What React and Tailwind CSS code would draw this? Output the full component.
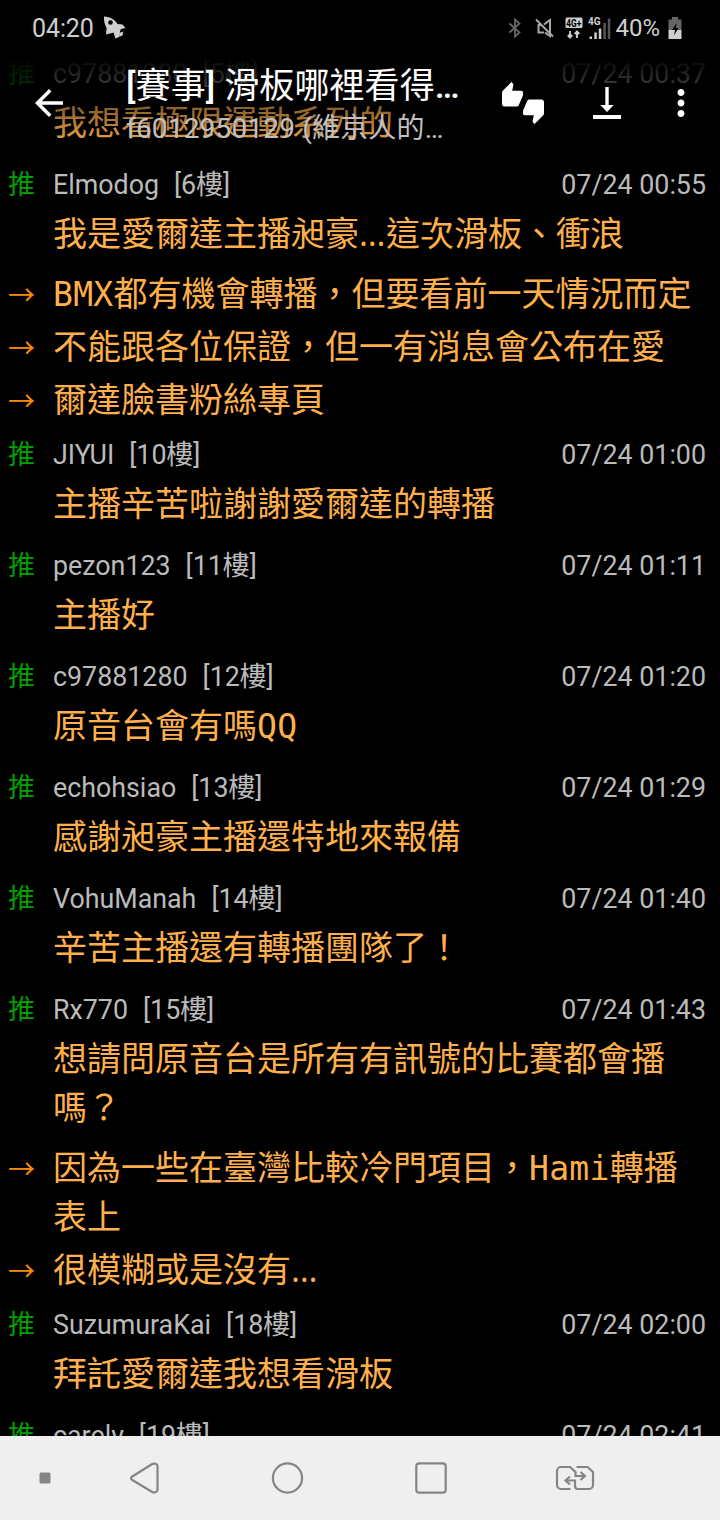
import { MdArrowBack, MdMoreVert, MdThumbsUpDown } from "react-icons/md";

const comments = [
  { user: "c97881280", floor: 5, time: "07/24 00:37", lines: ["我想看極限運動系列的"] },
  { user: "Elmodog", floor: 6, time: "07/24 00:55", lines: ["我是愛爾達主播昶豪…這次滑板、衝浪"] },
  { lines: ["BMX都有機會轉播，但要看前一天情況而定"] },
  { lines: ["不能跟各位保證，但一有消息會公布在愛"] },
  { lines: ["爾達臉書粉絲專頁"] },
  { user: "JIYUI", floor: 10, time: "07/24 01:00", lines: ["主播辛苦啦謝謝愛爾達的轉播"] },
  { user: "pezon123", floor: 11, time: "07/24 01:11", lines: ["主播好"] },
  { user: "c97881280", floor: 12, time: "07/24 01:20", lines: ["原音台會有嗎QQ"] },
  { user: "echohsiao", floor: 13, time: "07/24 01:29", lines: ["感謝昶豪主播還特地來報備"] },
  { user: "VohuManah", floor: 14, time: "07/24 01:40", lines: ["辛苦主播還有轉播團隊了！"] },
  { user: "Rx770", floor: 15, time: "07/24 01:43", lines: ["想請問原音台是所有有訊號的比賽都會播", "嗎？"] },
  { lines: ["因為一些在臺灣比較冷門項目，Hami轉播", "表上"] },
  { lines: ["很模糊或是沒有…"] },
  { user: "SuzumuraKai", floor: 18, time: "07/24 02:00", lines: ["拜託愛爾達我想看滑板"] },
  { user: "carely", floor: 19, time: "07/24 02:41", lines: [""] },
];

// latin runs and the ellipsis use their own face, the rest stays in the CJK one
const Line = ({ text }) => (
  <p className="h-[49px] leading-[49px] whitespace-nowrap">
    {text.split(/(…|[A-Za-z]+)/).map((part, i) => {
      if (part === "…") {
        return <span key={i} className="inline-block w-[27px] leading-none font-['Open_Sans',sans-serif]">…</span>;
      }
      if (/^[A-Za-z]+$/.test(part)) {
        return <span key={i} className="text-[33px] leading-none tracking-[0.3px] font-['DejaVu_Sans_Mono',monospace]">{part}</span>;
      }
      return part;
    })}
  </p>
);

const Body = ({ lines }) => (
  <div className="pl-[53px] text-[34px] text-[#ffb04c] font-['Liberation_Mono','Noto_Sans_CJK_TC',monospace]">
    {lines.map((line, i) => (
      <Line key={i} text={line} />
    ))}
  </div>
);

const Comment = ({ item }) => {
  if (!item.user) {
    return (
      <li className="flex pt-[3px] pb-px">
        <span className="-mr-[35px] w-[35px] pl-2 text-[27px] leading-[41px] text-[#ff8c00] font-['Noto_Sans_CJK_TC',sans-serif]">→</span>
        <Body lines={item.lines} />
      </li>
    );
  }
  return (
    <li className="pb-2">
      <div className="flex h-[54px] items-center pr-3.5 pb-px pl-2 text-[26.8px] text-[#bbbbbb]">
        <span className="w-[45px] text-[27px] text-[#00a000]">推</span>
        <span className="flex-1">
          {item.user}
          <span className="ml-[15px]">[{item.floor}樓]</span>
        </span>
        <span>{item.time}</span>
      </div>
      <Body lines={item.lines} />
    </li>
  );
};

const RocketIcon = () => (
  <svg width="24" height="24" viewBox="0 0 24 24" fill="#cfcfcf">
    <path d="M1 .5C7 .8 12 3.500 14.500 8l5 .6 3 3.400-4.500 1-.8 1.800-1.200 6.200-3.500 1.500-2-6-1.500.6L3 18.500l.6-6.500C1.500 8.500.8 4.500 1 .5z" />
    <circle cx="7.500" cy="6.500" r="2.300" fill="#000" />
    <path d="M16 17l4.500-1.500-1 2.500 1 .5-4 2.500z" />
  </svg>
);

const StatusBar = () => (
  <div className="flex h-14 items-center pr-[38px] pl-8 text-[25px] text-[#cfcfcf]">
    <span className="pt-px tracking-[-0.1px]">04:20</span>
    <span className="ml-[9px]"><RocketIcon /></span>
    <div className="ml-auto flex items-center">
      <svg width="14" height="20" viewBox="0 0 14 20" fill="none" stroke="#666" strokeWidth="1.800">
        <path d="M1.500 5.500l10 9L7 18.500v-17l4.500 4-10 9" />
      </svg>
      <svg className="ml-[13px]" width="19" height="20" viewBox="0 0 19 20" fill="none" stroke="#a8a8a8" strokeWidth="2">
        <path d="M9 14.500H3.500V7H6M9 6.500l6-4.500v16l-5-3.500M1 1.500l17 17" />
      </svg>
      <svg className="ml-[11px]" width="18" height="22" viewBox="0 0 18 22">
        <rect x="0.500" y="0.500" width="17" height="10.500" rx="1.500" fill="#cfcfcf" />
        <text x="8.800" y="9.500" fontSize="10" fontWeight="700" textAnchor="middle" textLength="15" lengthAdjust="spacingAndGlyphs" fill="#000">4G+</text>
        <path d="M5 14v6M2.800 18L5 20.500 7.200 18M12 21v-6M9.800 17L12 14.500l2.200 2.500" fill="none" stroke="#cfcfcf" strokeWidth="1.900" />
      </svg>
      <svg className="ml-[5px]" width="23" height="22" viewBox="0 0 23 22" fill="#cfcfcf">
        <text x="0" y="7.500" fontSize="10" fontWeight="700">4G</text>
        <path d="M1.500 19.500H4V22H1.500zM6.300 15.500h2.500V22H6.300zM10.800 11.500h2.500V22h-2.500z" />
        <path d="M15.300 6h2.500v16h-2.500zM19.800 1.500h2.500V22h-2.500z" fill="#555" />
      </svg>
      <span className="ml-1 text-[24px]">40%</span>
      <svg className="ml-2" width="14" height="22" viewBox="0 0 14 22">
        <path d="M4 0h6v2.500h3.500V13H.5V2.500H4z" fill="#666" />
        <path d="M.5 13h13v9H.5z" fill="#cfcfcf" />
        <path d="M8.500 6L4 13h3l-1 5.500L10.500 11H8z" fill="#000" />
      </svg>
    </div>
  </div>
);

const AppBar = () => (
  <div className="flex h-[94px] items-center text-white">
    <MdArrowBack size={42} className="ml-7 shrink-0" />
    <div className="ml-14 w-[340px] pt-[9px] whitespace-nowrap">
      <h1 className="h-[42px] text-[35px] leading-[42px] tracking-[0.1px]">
        <span className="font-medium">[</span>賽事<span className="font-medium">]</span> 滑板哪裡看得<span className="font-medium">…</span>
      </h1>
      <p className="h-[42px] text-[28px] leading-[42px] tracking-[0.18px] text-[#c0c0c0]">f6012950129 (維京人的…</p>
    </div>
    <MdThumbsUpDown size={42} className="ml-9 shrink-0" />
    <svg className="ml-[42px] shrink-0" width="42" height="42" viewBox="0 0 42 42" fill="#fff">
      <path d="M19.300 5h3.400v18h5L21 30l-6.700-7h5zM7 33h28v4H7z" />
    </svg>
    <MdMoreVert size={42} className="ml-8 shrink-0" />
  </div>
);

const NavBar = () => (
  <nav className="absolute inset-x-0 bottom-0 h-[84px] bg-[#efefef]">
    <svg width="720" height="84" viewBox="0 0 720 84" fill="none" stroke="#858585" strokeWidth="2.200">
      <rect x="39.500" y="36.500" width="11" height="11" rx="1.500" fill="#858585" stroke="none" />
      <path d="M132.300 40.500l19.500-12.200c2.500-1.500 5.700-.6 5.700 2v23.400c0 2.600-3.300 3.500-5.700 2l-19.500-11.700c-1.700-1-1.700-2.500 0-3.500z" />
      <circle cx="287.500" cy="42" r="14.600" />
      <rect x="416.300" y="27.300" width="29.400" height="29.400" rx="3" />
      <path d="M570.500 53H561a4 4 0 0 1-4-4V35a4 4 0 0 1 4-4h9l5.500 5v4h9M580.500 36l4.500 4-4.500 4M576.500 31h11l5.500 5v13a4 4 0 0 1-4 4h-11a3 3 0 0 1-3-3v-5.500h-9.500M570 40.500l-4.500 4 4.500 4" />
    </svg>
  </nav>
);

export default function App() {
  return (
    <div className="relative h-[1520px] w-[720px] overflow-hidden bg-black font-['Roboto','Noto_Sans_CJK_TC',sans-serif]">
      <ul className="pt-12">
        {comments.map((item, i) => (
          <Comment key={i} item={item} />
        ))}
      </ul>
      <header className="absolute inset-x-0 top-0 h-[150px] bg-linear-to-b from-black from-38% to-transparent">
        <StatusBar />
        <AppBar />
      </header>
      <NavBar />
    </div>
  );
}
